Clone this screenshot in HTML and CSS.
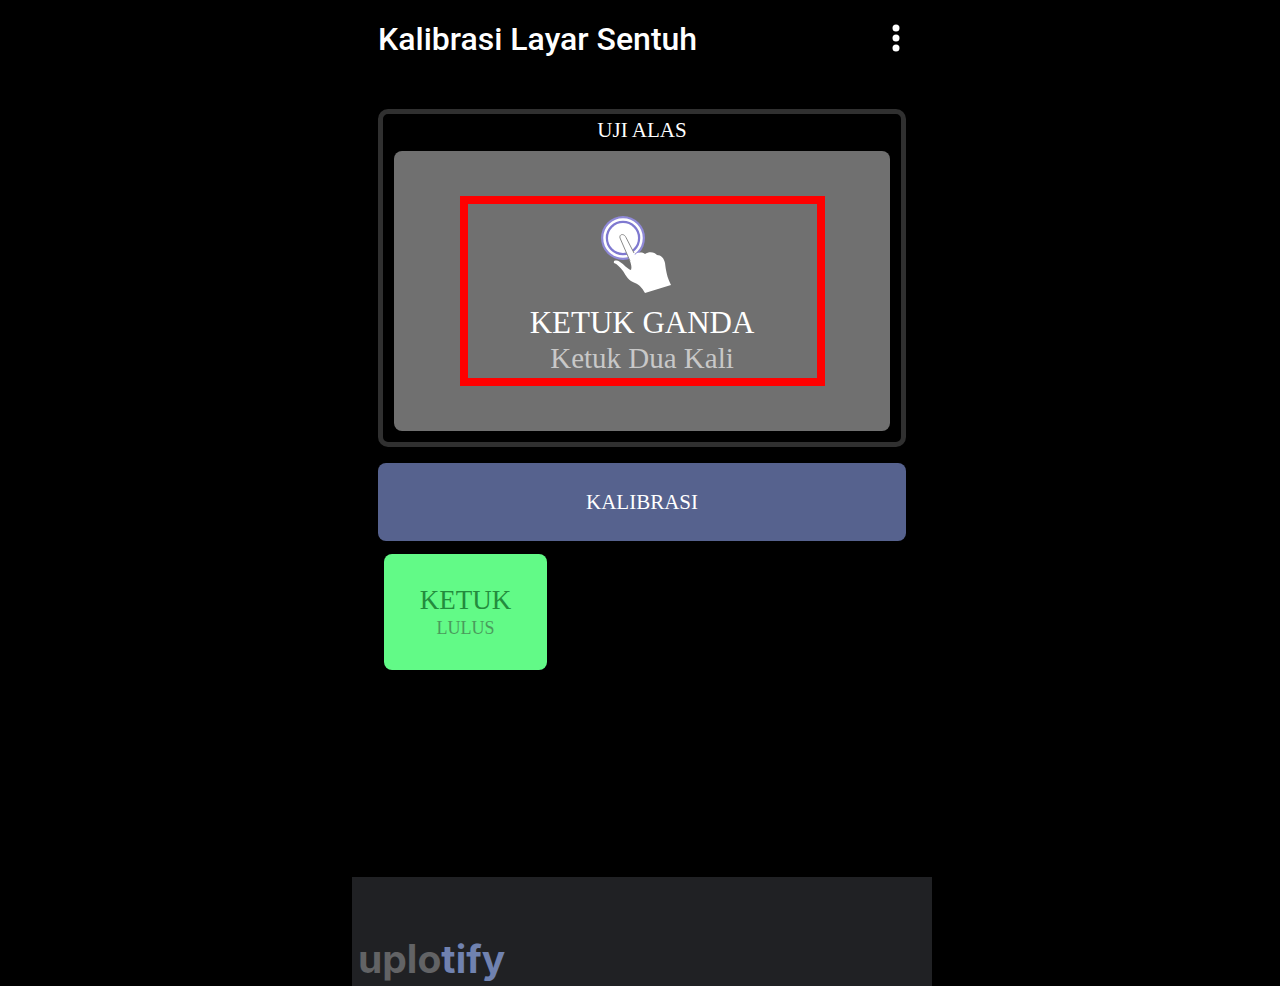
FILE: index.html
```
<!DOCTYPE html>
<html lang="id">
<head>
    <meta charset="UTF-8">
    <meta name="viewport" content="width=device-width, initial-scale=1.0">
    <title>Kalibrasi Layar Sentuh</title>
    <link rel="stylesheet" href="styles.css">
</head>
<body>

<div class="phone">
    <header class="topbar">
        <h1>Kalibrasi Layar Sentuh</h1>
        <button type="button" class="menu" aria-label="Menu">
            <svg width="8" height="28" viewBox="0 0 8 28" fill="#fff">
                <circle cx="4" cy="4" r="3.5"/>
                <circle cx="4" cy="14" r="3.5"/>
                <circle cx="4" cy="24" r="3.5"/>
            </svg>
        </button>
    </header>

    <main class="content">
        <section class="panel">
            <h2>UJI ALAS</h2>
            <button type="button" class="pad">
                <span class="prompt">
                    <svg class="tap-icon" width="100" height="80" viewBox="0 0 100 80">
                        <circle cx="31" cy="24" r="22" fill="#8f89d8"/>
                        <circle cx="31" cy="24" r="18.5" fill="#7f79d0" stroke="#fff" stroke-width="2.5"/>
                        <circle cx="31" cy="24" r="15" fill="#fff"/>
                        <path d="M28 24C27 20 32 19 34 23.500L43 41C45 38 50 38 53 40C57 37 63 38 65 41C69 41 72 44 73 49C74 57 75 63 79 71L53 79C50 74 48 71 43 69C37 67 34 62 31 57C28 53 25 50 22 49C21 46 25 46 28 48C32 50 35 55 39 56C40 53 39 50 38 47Z" fill="#fff"/>
                        <path d="M38 47L28 24C27 20 32 19 34 23.500L42 39" fill="none" stroke="#8a8a8a" stroke-width="1"/>
                    </svg>
                    <span class="prompt-title">KETUK GANDA</span>
                    <span class="prompt-text">Ketuk Dua Kali</span>
                </span>
            </button>
        </section>

        <button type="button" class="calibrate">KALIBRASI</button>

        <div class="result">
            <span class="result-name">KETUK</span>
            <span class="result-status">LULUS</span>
        </div>
    </main>

    <footer class="bottom">
        <div class="brand">uplo<span>tify</span></div>
    </footer>
</div>

</body>
</html>
```
FILE: styles.css
```
* {
    box-sizing: border-box;
}
body {
    margin: 0;
    padding-left: 4px;
    background-color: #000;
    color: #fff;
    font-family: "Liberation Serif", serif;
}
button {
    border: none;
    color: inherit;
    font-family: inherit;
    cursor: pointer;
}
.phone {
    display: flex;
    flex-direction: column;
    max-width: 580px;
    min-height: 100vh;
    margin: 0 auto;
}
.topbar {
    display: flex;
    justify-content: space-between;
    align-items: center;
    padding: 19px 26px 0;
}
.topbar h1 {
    margin: 0;
    font-family: Roboto, sans-serif;
    font-size: 32px;
    font-weight: 500;
    line-height: 40px;
}
.menu {
    display: flex;
    padding: 0 6px 2px;
    background: none;
}
.content {
    flex: 1;
    padding: 50px 26px 24px;
}
.panel {
    padding: 4px 11px 11px;
    border: 5px solid #303030;
    border-radius: 10px;
}
.panel h2 {
    margin: 0 0 9px;
    font-size: 21px;
    font-weight: normal;
    line-height: 24px;
    text-align: center;
}
.pad {
    display: flex;
    justify-content: center;
    width: 100%;
    padding: 45px 20px;
    border-radius: 8px;
    background-color: #707070;
}
.prompt {
    display: flex;
    flex-direction: column;
    align-items: center;
    width: 100%;
    max-width: 365px;
    padding: 10px 0 4px;
    border: 8px solid #f00;
}
.tap-icon {
    margin-bottom: 10px;
}
.prompt-title {
    font-size: 31px;
    line-height: 38px;
}
.prompt-text {
    color: #c8c8c8;
    font-size: 29px;
    line-height: 32px;
}
.calibrate {
    display: block;
    width: 100%;
    margin-top: 16px;
    padding: 26px 20px;
    border-radius: 8px;
    background-color: #56628e;
    font-size: 21px;
    line-height: 26px;
}
.result {
    display: flex;
    flex-direction: column;
    align-items: center;
    width: 163px;
    margin: 13px 6px 0;
    padding: 30px 10px;
    border-radius: 8px;
    background-color: #62fa87;
}
.result-name {
    color: #238b3d;
    font-size: 27px;
    line-height: 32px;
}
.result-status {
    color: #4a9a5c;
    font-size: 18px;
    line-height: 24px;
}
.bottom {
    padding: 60px 6px 5px;
    background-color: #202124;
}
.brand {
    color: #626365;
    font-family: Inter, sans-serif;
    font-size: 39px;
    font-weight: 700;
    line-height: 44px;
}
.brand span {
    color: #7082b0;
}
```
